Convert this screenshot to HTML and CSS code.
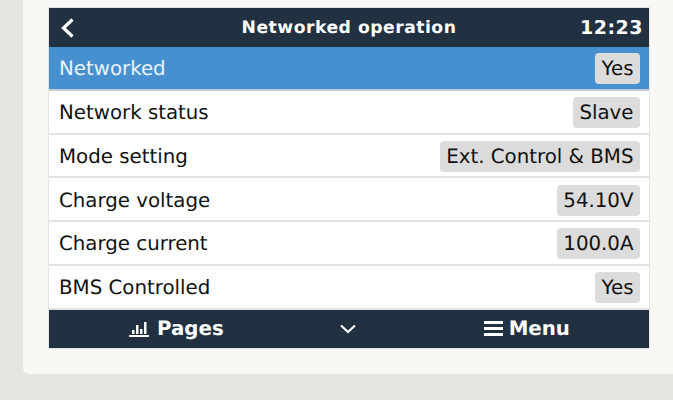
FILE: index.html
```html
<!DOCTYPE html>
<html lang="en">
<head>
    <meta charset="UTF-8">
    <meta name="viewport" content="width=device-width, initial-scale=1.0">
    <title>Networked operation</title>
    <link rel="stylesheet" href="styles.css">
</head>
<body>
    <div class="card">
        <div class="screen">
            <div class="header">
                <svg class="back" width="16" height="20" viewBox="0 0 16 20"><path d="M13.500 1.500 L4.500 10 L13.500 18.500" fill="none" stroke="#fff" stroke-width="3.200"/></svg>
                <span class="title">Networked operation</span>
                <span class="time">12:23</span>
            </div>
            <div class="row active"><span>Networked</span><span class="value">Yes</span></div>
            <div class="row"><span>Network status</span><span class="value">Slave</span></div>
            <div class="row"><span>Mode setting</span><span class="value">Ext. Control &amp; BMS</span></div>
            <div class="row"><span>Charge voltage</span><span class="value">54.10V</span></div>
            <div class="row"><span>Charge current</span><span class="value">100.0A</span></div>
            <div class="row"><span>BMS Controlled</span><span class="value">Yes</span></div>
            <div class="footer">
                <div class="foot-item pages">
                    <svg width="20" height="16" viewBox="0 0 20 16"><path d="M0 14 H20 V16 H0 Z M3 9 H5.500 V13 H3 Z M7 4 H9.500 V13 H7 Z M11 8 H13.500 V13 H11 Z M15 1 H17.500 V13 H15 Z" fill="#fff"/></svg>
                    <span>Pages</span>
                </div>
                <svg class="down" width="16" height="10" viewBox="0 0 16 10"><path d="M1 1.500 L8 8 L15 1.500" fill="none" stroke="#fff" stroke-width="2.200"/></svg>
                <div class="foot-item menu">
                    <svg width="19" height="15" viewBox="0 0 19 15"><path d="M0 0 H19 V3 H0 Z M0 6 H19 V9 H0 Z M0 12 H19 V15 H0 Z" fill="#fff"/></svg>
                    <span>Menu</span>
                </div>
            </div>
        </div>
    </div>
</body>
</html>
```

FILE: styles.css
```css
html, body {
    margin: 0;
    padding: 0;
    height: 400px;
    overflow: hidden;
}
body {
    font-family: "DejaVu Sans", sans-serif;
    background-color: #e6e5e1;
    text-rendering: geometricPrecision;
}
.card {
    margin-left: 23px;
    height: 374px;
    padding: 7px 23px 0 25px;
    box-sizing: border-box;
    background-color: #f9f8f4;
    border-bottom-left-radius: 6px;
}
.screen {
    width: 600px;
    border: 1px solid #e4e4e4;
    background-color: #fff;
}
.header {
    display: grid;
    grid-template-columns: 1fr auto 1fr;
    align-items: center;
    height: 39px;
    padding: 0 6px;
    background-color: #213141;
    color: #fff;
    font-weight: bold;
}
.back {
    margin-left: 4px;
}
.title {
    font-size: 17.200px;
    letter-spacing: 0.500px;
}
.time {
    justify-self: end;
    font-size: 19px;
    letter-spacing: 0.500px;
}
.row {
    display: flex;
    align-items: center;
    justify-content: space-between;
    height: 40px;
    padding: 1.750px 9px 0 10px;
    border-bottom: 2px solid #e2e2e2;
    font-size: 19.800px;
    line-height: 31px;
    color: #111;
}
.active {
    background-color: #4690d0;
    color: #eaf3fb;
    border-bottom-color: #c6cdd4;
}
.value {
    padding: 0 6.500px;
    height: 31px;
    background-color: #dcdcdc;
    border-radius: 4px;
    color: #111;
}
.footer {
    display: flex;
    align-items: center;
    height: 38px;
    background-color: #213141;
    color: #fff;
    font-size: 19.800px;
    font-weight: bold;
}
.foot-item {
    display: flex;
    align-items: center;
    gap: 8px;
}
.foot-item span {
    margin-bottom: 1px;
}
.pages {
    margin-left: 80px;
}
.down {
    margin-left: 116px;
}
.menu {
    margin-left: 128px;
    gap: 6px;
}
```
